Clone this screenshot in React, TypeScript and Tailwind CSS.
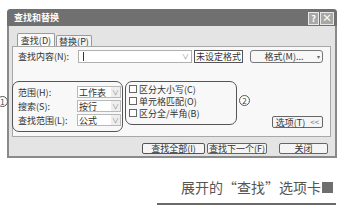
import React from "react";

const font = { fontFamily: '"Noto Sans CJK SC", "Noto Sans", sans-serif' };

function Select({ text }: { text: string }) {
  return (
    <div className="flex h-[12px] w-[44px] items-center border border-[#b8b8b8] bg-white">
      <span className="flex-1 pl-[1px] text-[9px] leading-none text-[#333]">{text}</span>
      <span className="flex h-[10px] w-[9px] items-center justify-center bg-[#eeeeee] text-[7px] leading-none text-[#888]">
        ∨
      </span>
    </div>
  );
}

function Check({ label }: { label: string }) {
  return (
    <div className="flex h-[12px] items-center gap-[2px]">
      <span className="h-[8px] w-[8px] border border-[#666] bg-white" />
      <span className="text-[9px] leading-none text-[#333]">{label}</span>
    </div>
  );
}

export default function App() {
  return (
    <div className="relative h-[214px] w-[347px] overflow-hidden bg-white" style={font}>
      {/* annotation ① */}
      <div className="absolute left-[-3px] top-[96px] flex h-[11px] w-[11px] items-center justify-center rounded-full border border-[#555] bg-white text-[8px] leading-none text-[#444]">
        1
      </div>

      <div className="pl-[7px] pt-[9px]">
        <div className="flex h-[149px] w-[330px] flex-col rounded-t-[4px] border-x-2 border-b-2 border-[#8a8a8a] bg-[#e4e4e4]">
          {/* title bar */}
          <div className="mx-[-2px] flex h-[17px] items-center justify-between rounded-t-[4px] bg-[#707070] pl-[7px] pr-[3px]">
            <span className="text-[9px] font-bold leading-none text-white">查找和替换</span>
            <div className="flex gap-[1px] pt-[1px]">
              <span className="flex h-[13px] w-[11px] items-center justify-center border border-[#e8e8e8] bg-[#a8a8a8] text-[9px] font-bold leading-none text-white">
                ?
              </span>
              <span className="flex h-[13px] w-[14px] items-center justify-center border border-[#e8e8e8] bg-[#a8a8a8] text-[10px] font-bold leading-none text-white">
                ×
              </span>
            </div>
          </div>

          {/* tabs */}
          <div className="mt-[7px] flex h-[13px] items-end pl-[8px]">
            <div className="flex h-[13px] w-[38px] items-center justify-center rounded-t-[2px] border border-b-0 border-[#9a9a9a] bg-[#fafafa] text-[9px] leading-none text-[#333]">
              查找(D)
            </div>
            <div className="ml-[1px] flex h-[11px] w-[36px] items-center justify-center rounded-t-[2px] border border-b-0 border-[#9a9a9a] bg-[#f3f3f3] text-[9px] leading-none text-[#333]">
              替换(P)
            </div>
          </div>

          {/* panel */}
          <div className="ml-[3px] flex h-[91px] w-[319px] flex-col border border-[#a8a8a8] bg-[#f8f8f8]">
            <div className="mt-[3px] flex h-[13px] items-center pl-[5px]">
              <span className="w-[60px] text-[9px] leading-none text-[#333]">查找内容(N):</span>
              <div className="flex h-[13px] w-[114px] items-center border border-[#b0b0b0] bg-white">
                <span className="ml-[4px] h-[9px] w-[1px] bg-[#333]" />
                <span className="ml-auto mr-[2px] text-[7px] leading-none text-[#888]">∨</span>
              </div>
              <div className="ml-[2px] flex h-[13px] w-[49px] items-center justify-center border border-[#555] bg-white text-[9px] leading-none text-[#333]">
                未设定格式
              </div>
              <div className="ml-[7px] flex h-[13px] w-[73px] items-center justify-center rounded-[3px] border border-[#777] bg-[#f7f7f7] text-[9px] leading-none text-[#333]">
                <span className="flex-1 text-center">格式(M)...</span>
                <span className="mr-[2px] text-[6px] text-[#666]">▾</span>
              </div>
            </div>

            <div className="mt-[18px] flex items-start">
              {/* group 1 */}
              <div className="ml-[-1px] flex h-[51px] w-[111px] flex-col gap-[2px] rounded-[7px] border-[1.5px] border-[#555] pl-[5px] pt-[4px]">
                <div className="flex h-[12px] items-center">
                  <span className="w-[59px] text-[9px] leading-none text-[#333]">范围(H):</span>
                  <Select text="工作表" />
                </div>
                <div className="flex h-[12px] items-center">
                  <span className="w-[59px] text-[9px] leading-none text-[#333]">搜索(S):</span>
                  <Select text="按行" />
                </div>
                <div className="flex h-[12px] items-center">
                  <span className="w-[59px] text-[9px] leading-none text-[#333]">查找范围(L):</span>
                  <Select text="公式" />
                </div>
              </div>

              {/* group 2 */}
              <div className="ml-[2px] flex h-[44px] w-[112px] flex-col rounded-[7px] border-[1.5px] border-[#555] pl-[3px] pt-[1px]">
                <Check label="区分大小写(C)" />
                <Check label="单元格匹配(O)" />
                <Check label="区分全/半角(B)" />
              </div>

              {/* annotation ② */}
              <div className="ml-[2px] mt-[14px] flex h-[11px] w-[11px] items-center justify-center rounded-full border border-[#555] bg-white text-[8px] leading-none text-[#444]">
                2
              </div>

              <div className="ml-auto mr-[7px] mt-[35px] flex h-[12px] w-[51px] items-center justify-center gap-[5px] rounded-[2px] border border-[#666] bg-[#f5f5f5] text-[9px] leading-none text-[#333]">
                <span>选项(T)</span>
                <span className="text-[8px] text-[#666]">&lt;&lt;</span>
              </div>
            </div>
          </div>

          {/* bottom buttons */}
          <div className="mt-[6px] flex h-[11px] justify-end pr-[7px]">
            <div className="flex h-[11px] w-[63px] items-center justify-center rounded-[2px] border-[1.5px] border-[#555] bg-[#f5f5f5] text-[9px] leading-none text-[#333]">
              查找全部(I)
            </div>
            <div className="ml-[2px] flex h-[11px] w-[60px] items-center justify-center rounded-[2px] border border-[#666] bg-[#f5f5f5] text-[9px] leading-none text-[#333]">
              查找下一个(F)
            </div>
            <div className="ml-[12px] flex h-[11px] w-[49px] items-center justify-center rounded-[2px] border border-[#666] bg-[#f5f5f5] text-[9px] leading-none text-[#333]">
              关闭
            </div>
          </div>
        </div>
      </div>

      {/* caption */}
      <div className="mt-[20px] flex h-[18px] items-center justify-end pr-[14px]">
        <span className="text-[14px] leading-none text-[#555]">展开的“查找”选项卡</span>
        <span className="ml-[1px] h-[11px] w-[11px] bg-[#6e6e6e]" />
      </div>
      <div className="ml-[157px] mt-[7px] h-[2px] w-[179px] bg-[#6a6a6a]" />
    </div>
  );
}
